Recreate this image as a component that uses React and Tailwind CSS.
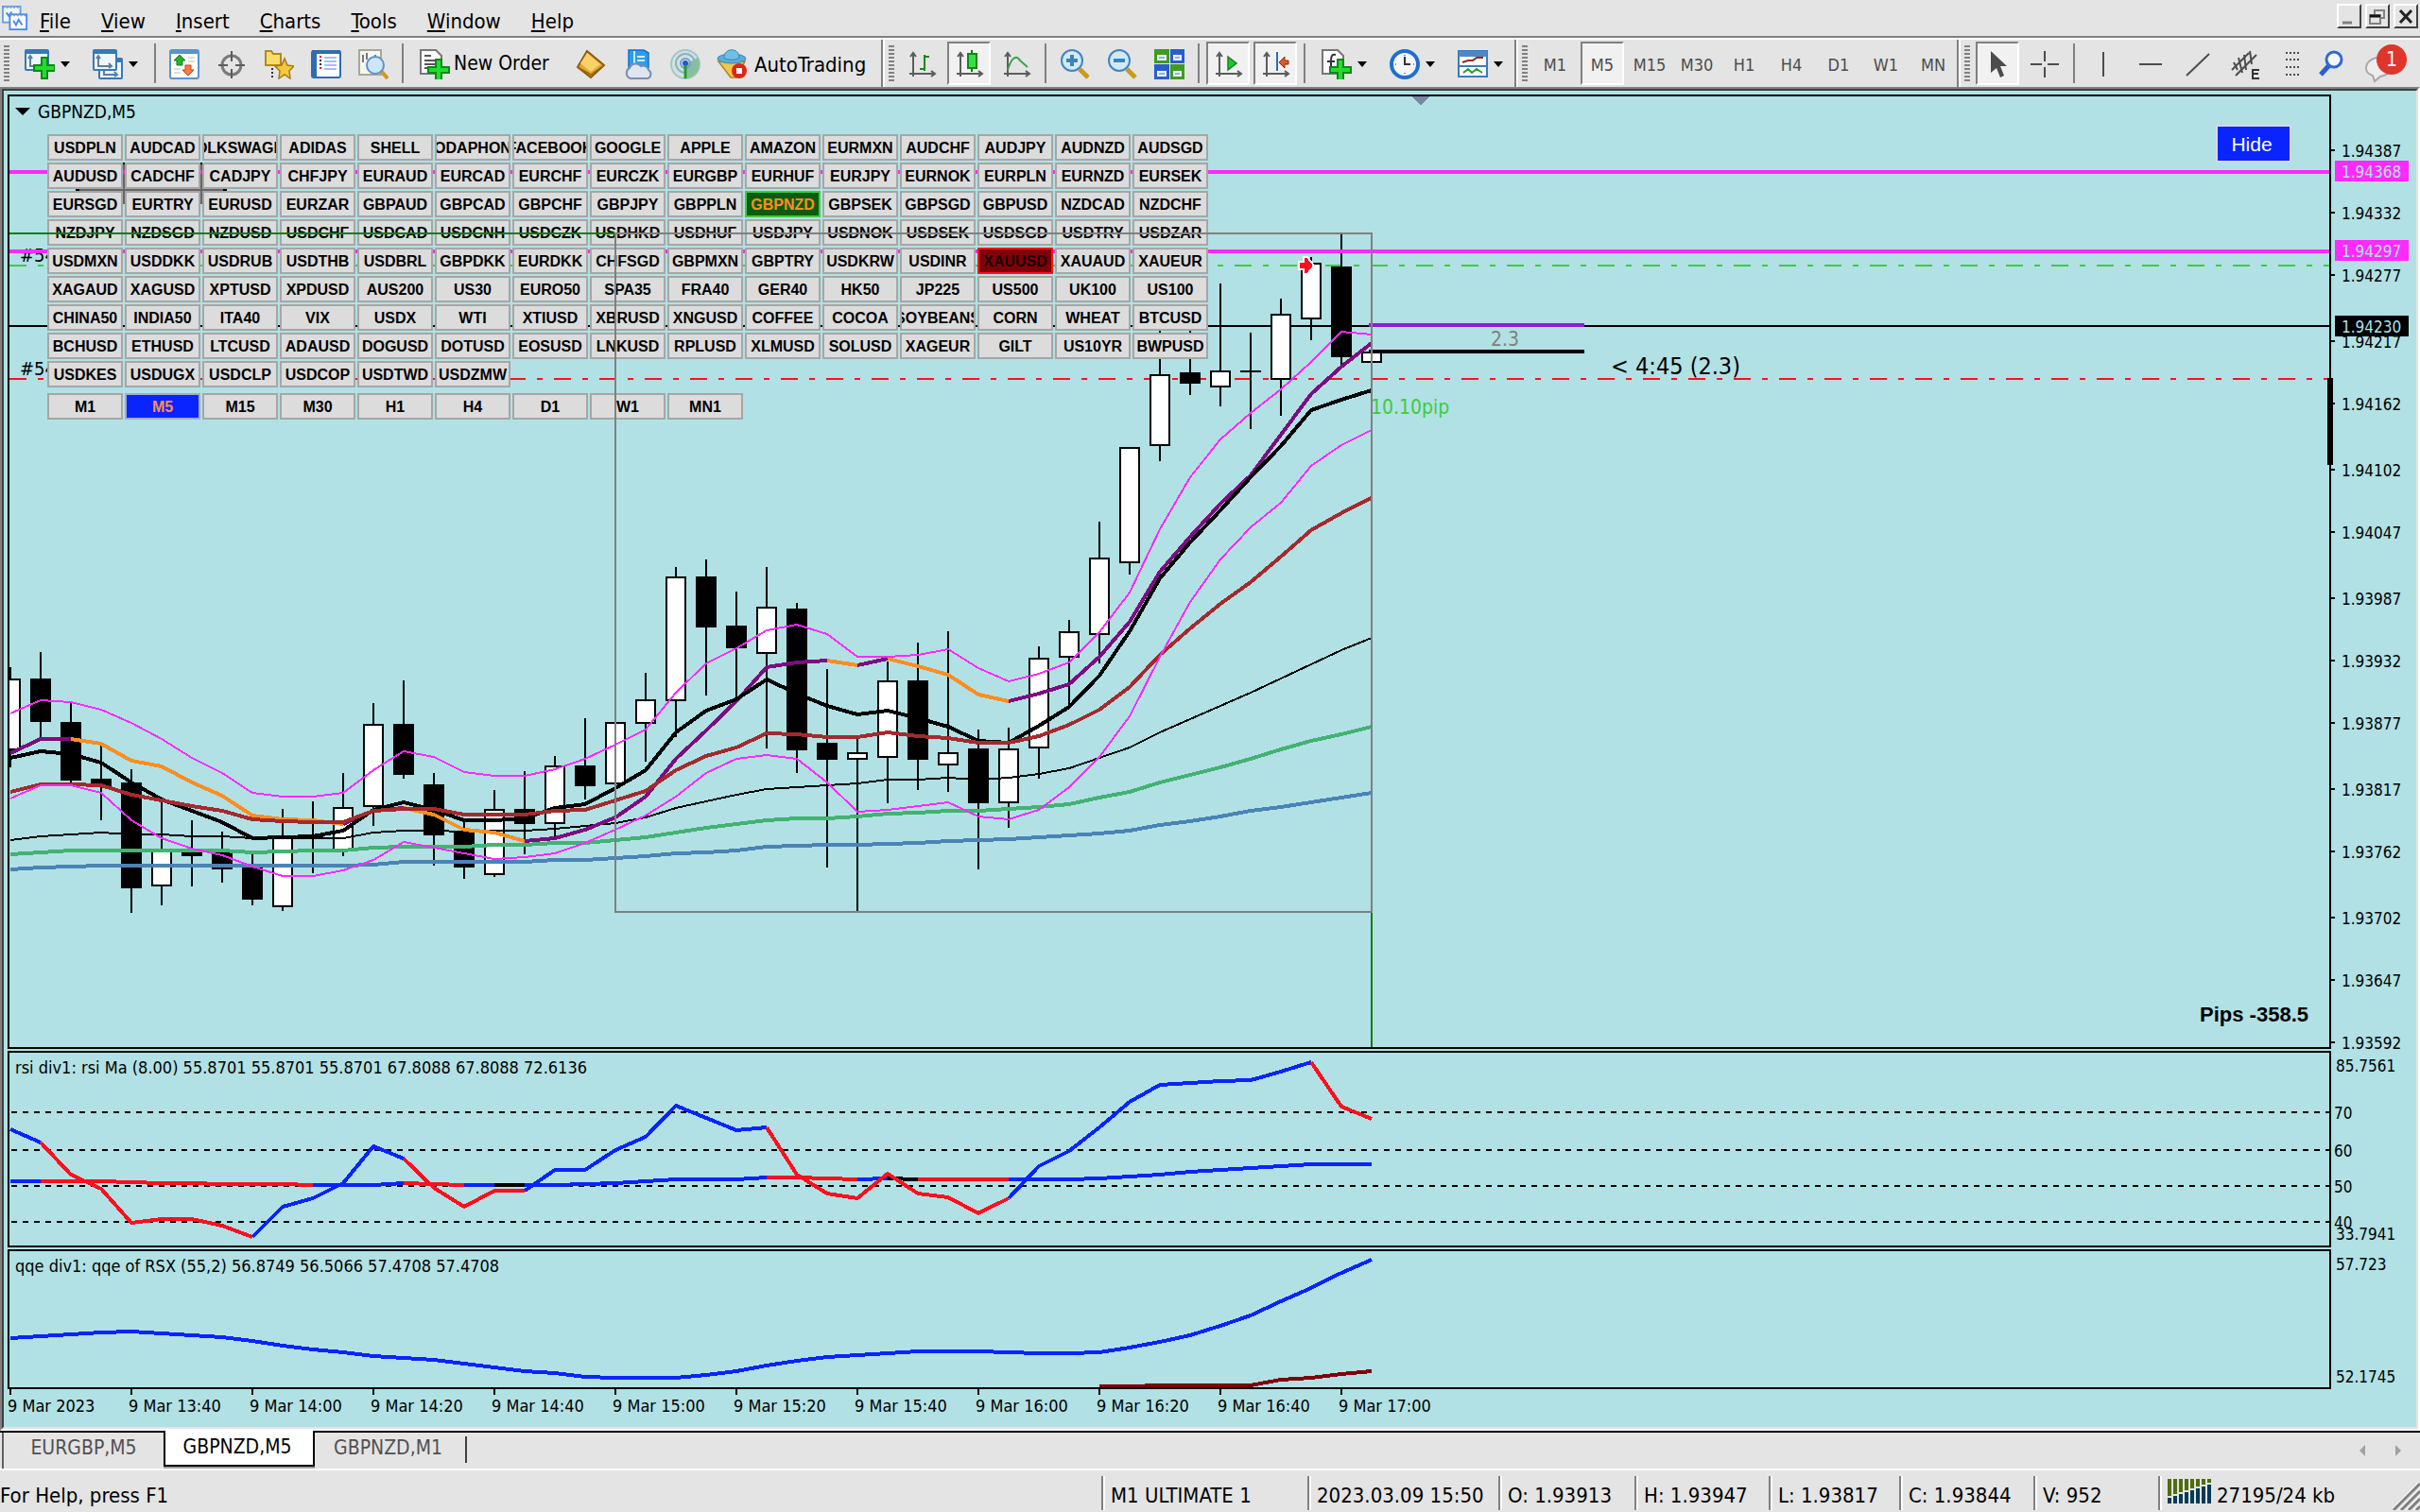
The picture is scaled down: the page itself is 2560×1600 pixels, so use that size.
import React from "react";

/* ---------- chart data (one entry per 5-minute bar) ---------- */
const barX = (i) => 11 + i * 32;

// [type, bodyTop, bodyBottom, high, low]
const candles = [
  ["w", 718, 794, 706, 812], ["b", 718, 764, 690, 780], ["b", 764, 826, 744, 828], ["b", 824, 832, 788, 868],
  ["b", 828, 940, 814, 966], ["w", 900, 938, 846, 958], ["b", 900, 906, 868, 938], ["b", 902, 920, 880, 934],
  ["b", 916, 952, 904, 958], ["w", 886, 960, 856, 964], ["b", 884, 888, 848, 924], ["w", 854, 900, 818, 906],
  ["w", 766, 854, 744, 874], ["b", 766, 820, 720, 824], ["b", 830, 884, 818, 916], ["b", 880, 918, 870, 930],
  ["w", 856, 926, 836, 928], ["b", 856, 872, 816, 904], ["w", 810, 872, 800, 886], ["b", 810, 832, 760, 846],
  ["w", 764, 830, 764, 830], ["w", 740, 766, 712, 806], ["w", 610, 742, 600, 780], ["b", 610, 664, 592, 736],
  ["b", 662, 686, 626, 740], ["w", 642, 692, 600, 792], ["b", 644, 794, 638, 818], ["b", 786, 804, 708, 918],
  ["w", 796, 804, 778, 964], ["w", 720, 802, 700, 850], ["b", 720, 804, 680, 836], ["w", 796, 810, 668, 838],
  ["b", 792, 850, 772, 920], ["w", 792, 850, 770, 876], ["w", 696, 792, 684, 824], ["w", 668, 696, 656, 748],
  ["w", 590, 672, 552, 702], ["w", 473, 596, 473, 608], ["w", 396, 472, 350, 488], ["b", 394, 406, 350, 418],
  ["w", 392, 410, 300, 430], ["b", 392, 394, 352, 454], ["w", 332, 402, 316, 440], ["w", 278, 338, 272, 360],
  ["b", 282, 378, 248, 386], ["w", 372, 384, 372, 384],
];

const upperBand = [755, 741, 743, 751, 765, 782, 802, 818, 839, 843, 843, 839, 815, 795, 801, 817, 821, 821, 814, 803, 788, 772, 733, 702, 686, 667, 661, 671, 695, 695, 693, 687, 707, 721, 713, 701, 669, 627, 560, 505, 465, 437, 412, 383, 351, 354];
const lowerBand = [845, 831, 831, 839, 868, 887, 898, 905, 917, 927, 927, 921, 910, 891, 897, 903, 909, 907, 903, 892, 878, 863, 843, 818, 803, 799, 803, 828, 859, 857, 853, 849, 864, 867, 857, 833, 801, 758, 695, 637, 592, 558, 532, 493, 471, 455];
const trendMa = [797, 782, 782, 787, 805, 811, 828, 842, 863, 867, 868, 872, 858, 855, 862, 878, 881, 890, 887, 878, 865, 843, 803, 773, 742, 706, 701, 699, 704, 697, 705, 714, 735, 742, 734, 724, 695, 658, 605, 568, 533, 503, 460, 417, 388, 363];
const fastMa = [802, 795, 798, 807, 828, 846, 858, 870, 887, 886, 885, 879, 857, 849, 857, 868, 868, 866, 855, 851, 834, 815, 775, 752, 740, 719, 734, 747, 756, 752, 760, 769, 784, 786, 768, 748, 715, 668, 612, 574, 540, 505, 472, 434, 423, 413];
const brownMa = [838, 830, 830, 831, 841, 847, 853, 858, 867, 869, 870, 870, 858, 856, 856, 862, 862, 862, 858, 857, 847, 837, 815, 800, 791, 776, 777, 780, 780, 775, 779, 781, 786, 786, 779, 767, 751, 727, 693, 665, 639, 616, 589, 561, 543, 527];
const thinMa = [889, 885, 883, 881, 883, 883, 885, 885, 887, 887, 887, 887, 881, 879, 879, 880, 879, 879, 877, 874, 871, 865, 855, 848, 841, 835, 833, 831, 829, 825, 825, 823, 825, 823, 819, 813, 802, 791, 775, 761, 747, 733, 718, 703, 688, 675];
const greenMa = [904, 902, 900, 900, 900, 900, 900, 900, 902, 901, 900, 900, 897, 896, 896, 896, 894, 894, 892, 892, 889, 886, 881, 876, 872, 868, 866, 866, 864, 861, 860, 858, 858, 856, 854, 851, 844, 838, 828, 820, 812, 803, 793, 784, 777, 769];
const blueMa = [920, 918, 917, 916, 916, 916, 916, 916, 916, 916, 916, 916, 915, 912, 912, 912, 912, 912, 910, 910, 908, 906, 903, 902, 900, 896, 895, 894, 894, 893, 892, 890, 889, 888, 886, 884, 882, 879, 873, 869, 864, 858, 854, 849, 844, 839];

const rsiFast = [1195, 1209, 1243, 1258, 1294, 1290, 1290, 1297, 1309, 1277, 1268, 1252, 1213, 1226, 1257, 1277, 1260, 1260, 1238, 1238, 1217, 1203, 1170, 1183, 1196, 1193, 1243, 1263, 1268, 1242, 1263, 1267, 1284, 1268, 1234, 1218, 1193, 1166, 1148, 1146, 1144, 1143, 1134, 1124, 1171, 1184];
const rsiSlow = [1250, 1250, 1250, 1250, 1251, 1252, 1252, 1253, 1253, 1253, 1254, 1254, 1254, 1252, 1253, 1254, 1254, 1254, 1254, 1253, 1252, 1250, 1248, 1248, 1248, 1246, 1246, 1247, 1248, 1247, 1248, 1248, 1248, 1248, 1248, 1248, 1247, 1245, 1243, 1240, 1238, 1236, 1234, 1232, 1232, 1232];
const qqe = [1416, 1414, 1412, 1410, 1409, 1411, 1413, 1415, 1419, 1424, 1428, 1431, 1435, 1437, 1439, 1443, 1447, 1451, 1453, 1457, 1458, 1458, 1458, 1455, 1451, 1445, 1440, 1436, 1434, 1432, 1430, 1430, 1430, 1431, 1432, 1432, 1431, 1426, 1420, 1413, 1403, 1392, 1377, 1363, 1347, 1333];
const qqeSlow = [1467, 1467, 1466, 1466, 1466, 1466, 1460, 1458, 1454, 1451];

const BLUE = "#0a24ff";
const RED = "#ff0f1f";
const MAGENTA = "#ff2aff";
const PURPLE = "#7e0c80";
const ORANGE = "#ff8e21";
const GREEN = "#3ecb3f";

const points = (ys, from = 0) => ys.map((y, i) => `${barX(i + from)},${y}`).join(" ");

function Line({ ys, color, width = 4, from = 0 }) {
  return <polyline points={points(ys, from)} fill="none" stroke={color} strokeWidth={width} />;
}

function Segments({ ys, parts }) {
  return parts.map(([a, b, color]) => (
    <Line key={`${a}-${b}`} ys={ys.slice(a, b + 1)} from={a} color={color} />
  ));
}

function Candles() {
  return candles.map(([type, top, bottom, high, low], i) => {
    const x = barX(i);
    return (
      <g key={i}>
        <rect x={x - 1} y={high} width="2" height={low - high} fill="#000" />
        <rect x={x - 11} y={top} width="22" height={bottom - top} fill="#000" />
        {type === "w" && <rect x={x - 9} y={top + 2} width="18" height={bottom - top - 4} fill="#fff" />}
      </g>
    );
  });
}

/* ---------- symbol grid ---------- */
const symbols = `USDPLN AUDCAD VOLKSWAGEN ADIDAS SHELL VODAPHONE FACEBOOK GOOGLE APPLE AMAZON EURMXN AUDCHF AUDJPY AUDNZD AUDSGD
AUDUSD CADCHF CADJPY CHFJPY EURAUD EURCAD EURCHF EURCZK EURGBP EURHUF EURJPY EURNOK EURPLN EURNZD EURSEK
EURSGD EURTRY EURUSD EURZAR GBPAUD GBPCAD GBPCHF GBPJPY GBPPLN GBPNZD GBPSEK GBPSGD GBPUSD NZDCAD NZDCHF
NZDJPY NZDSGD NZDUSD USDCHF USDCAD USDCNH USDCZK USDHKD USDHUF USDJPY USDNOK USDSEK USDSGD USDTRY USDZAR
USDMXN USDDKK USDRUB USDTHB USDBRL GBPDKK EURDKK CHFSGD GBPMXN GBPTRY USDKRW USDINR XAUUSD XAUAUD XAUEUR
XAGAUD XAGUSD XPTUSD XPDUSD AUS200 US30 EURO50 SPA35 FRA40 GER40 HK50 JP225 US500 UK100 US100
CHINA50 INDIA50 ITA40 VIX USDX WTI XTIUSD XBRUSD XNGUSD COFFEE COCOA SOYBEANS CORN WHEAT BTCUSD
BCHUSD ETHUSD LTCUSD ADAUSD DOGUSD DOTUSD EOSUSD LNKUSD RPLUSD XLMUSD SOLUSD XAGEUR GILT US10YR BWPUSD
USDKES USDUGX USDCLP USDCOP USDTWD USDZMW`.split(/\s+/);
const frames = ["M1", "M5", "M15", "M30", "H1", "H4", "D1", "W1", "MN1"];

function cellTone(name) {
  if (name === "GBPNZD") return "border-[#3ecb3f] bg-[#0b5c10] text-[#ff8e21]";
  if (name === "XAUUSD") return "border-[#ff0f1f] bg-[#800008] text-[#1c0000]";
  if (name === "M5") return "border-[#a9a9c8] bg-[#0a24ff] text-[#ff8e50]";
  return "border-[#a6a6a6] bg-[#dcdcdc] text-black";
}

function Cell({ name }) {
  return (
    <button
      type="button"
      className={`flex h-7 items-center justify-center overflow-hidden whitespace-nowrap border-2 pt-0.5 font-['Liberation_Sans',sans-serif] text-[16px] leading-none font-bold ${cellTone(name)}`}
    >
      {name}
    </button>
  );
}

/* ---------- toolbar icons ---------- */
function Icon({ children }) {
  return (
    <svg viewBox="0 0 32 32" className="size-8 shrink-0" fill="none" aria-hidden="true">
      {children}
    </svg>
  );
}
const GreenPlus = ({ x = 0, y = 0 }) => (
  <path transform={`translate(${x} ${y})`} d="M8 0h6v8h8v6h-8v8H8v-8H0V8h8z" fill="#22dd2c" stroke="#0c8a14" strokeWidth="2" />
);
const ChartSheet = ({ x = 0, y = 0 }) => (
  <g transform={`translate(${x} ${y})`}>
    <rect x="1" y="1" width="24" height="21" rx="1" fill="#eef5fc" stroke="#3a78b4" strokeWidth="2" />
    <path d="M1 3h24" stroke="#3a78b4" strokeWidth="4" />
    <path d="M6 8v10h14M4 10l2-3 2 3M17 15l3 3-3 2" stroke="#5a7fa6" strokeWidth="2" />
  </g>
);
const Axes = () => <path d="M7 4v25M3 26h26M4 8l3-4 3 4M26 23l4 3-4 3" stroke="#5c5c5c" strokeWidth="2" />;

const icons = {
  newChart: <Icon><ChartSheet /><GreenPlus x={10} y={9} /></Icon>,
  profiles: <Icon><ChartSheet x={6} y={9} /><ChartSheet /></Icon>,
  market: (
    <Icon>
      <rect x="1" y="1" width="30" height="30" rx="2" fill="#fff" stroke="#5a94cf" strokeWidth="2" />
      <path d="M1 3h30" stroke="#5a94cf" strokeWidth="4" />
      <path d="M20 9h7M20 13h7M5 21h7M5 25h7" stroke="#ddd" strokeWidth="2" />
      <path d="M11 6l6 6h-3v5H8v-5H5z" fill="#22b42c" stroke="#118018" />
      <path d="M20 28l-6-6h3v-5h6v5h3z" fill="#ff7a4a" stroke="#c83c14" />
    </Icon>
  ),
  target: (
    <Icon>
      <circle cx="16" cy="17" r="10" stroke="#7a7a7a" strokeWidth="3" />
      <path d="M16 2v11M16 21v10M2 17h10M20 17h10" stroke="#5c5c5c" strokeWidth="2" />
    </Icon>
  ),
  star: (
    <Icon>
      <path d="M2 2h6l2 3h8v12H2z" fill="#f7dc6a" stroke="#b08a1c" strokeWidth="2" />
      <path d="M9 20v12" stroke="#333" strokeWidth="2" strokeDasharray="2 2" />
      <path d="M22 10l3 7 7 1-5 5 1 8-6-4-6 4 1-8-5-5 7-1z" fill="#f5c93c" stroke="#a87a14" strokeWidth="1.5" />
    </Icon>
  ),
  list: (
    <Icon>
      <rect x="1" y="2" width="30" height="28" rx="2" fill="#fff" stroke="#2f6cb0" strokeWidth="2" />
      <path d="M1 3h30" stroke="#2f6cb0" strokeWidth="4" />
      <path d="M4 4v25" stroke="#2f6cb0" strokeWidth="4" />
      <path d="M14 9h13M14 13h13M14 17h13M14 21h13" stroke="#a9bdf2" strokeWidth="2" />
      <path d="M9 7h2v2H9zM9 19h2v2H9z" fill="red" />
      <path d="M10 11v7" stroke="#222" strokeWidth="2" strokeDasharray="2 2" />
    </Icon>
  ),
  tester: (
    <Icon>
      <rect x="1" y="1" width="23" height="26" fill="#f6f6f2" stroke="#a9a795" strokeWidth="2" />
      <path d="M5 6v8M9 4v7M18 6v6" stroke="#777" strokeWidth="2" />
      <path d="M24 23l7 8" stroke="#d19a1c" strokeWidth="4" />
      <circle cx="18" cy="17" r="9" fill="#cde6fa" stroke="#5e93c4" strokeWidth="2" />
    </Icon>
  ),
  order: (
    <Icon>
      <path d="M1 1h16l6 6v19H1z" fill="#fafafa" stroke="#777" strokeWidth="2" />
      <path d="M5 7h7M5 12h12M5 16h12M5 20h6" stroke="#555" strokeWidth="2" />
      <GreenPlus x={9} y={11} />
    </Icon>
  ),
  gold: (
    <Icon>
      <path d="M12 2l18 15-14 13L2 19z" fill="#e6a82e" stroke="#8a5a10" strokeWidth="2" />
      <path d="M12 4l14 12-10 8L5 15z" fill="#f8d268" />
      <path d="M2 19l14 8 14-10" stroke="#9a6514" strokeWidth="1.5" />
    </Icon>
  ),
  cloud: (
    <Icon>
      <path d="M6 1h16l5 3v16H6z" fill="#2a9df2" stroke="#1672c4" strokeWidth="1.5" />
      <path d="M12 2v17M15 8h8M15 12h8" stroke="#cfeaff" strokeWidth="2" />
      <path d="M8 31a6 6 0 01-1-11 7 7 0 0112-2 6 6 0 018 4 5 5 0 01-1 9z" fill="#dfe5f2" stroke="#7c8cb0" strokeWidth="2" />
    </Icon>
  ),
  signal: (
    <Icon>
      <circle cx="16" cy="16" r="15" fill="#d3e2df" stroke="#a4c4c8" strokeWidth="2" />
      <path d="M16 16V31a15 15 0 0013-22z" fill="#84c48c" />
      <circle cx="16" cy="15" r="10" stroke="#8ab2cc" strokeWidth="2" />
      <circle cx="16" cy="15" r="5" stroke="#6f9fd4" strokeWidth="2" />
      <circle cx="16" cy="15" r="3" fill="#2458c8" />
      <path d="M16 17v14" stroke="#1f9c30" strokeWidth="3" />
    </Icon>
  ),
  auto: (
    <Icon>
      <path d="M2 13h28l-9 17h-6z" fill="#f2c64a" stroke="#b08222" strokeWidth="1.5" />
      <ellipse cx="16" cy="10" rx="15" ry="5" fill="#58acd8" stroke="#3b86b2" />
      <path d="M8 9c0-11 16-11 16 0-4 3-12 3-16 0z" fill="#6fc0e6" stroke="#3b86b2" />
      <circle cx="24" cy="23" r="8" fill="#e02418" />
      <path d="M21 20h6v6h-6z" fill="#fff" />
    </Icon>
  ),
  bars: <Icon><Axes /><path d="M19 6v17M19 8h5M14 21h5" stroke="#128a18" strokeWidth="2" /></Icon>,
  candle: (
    <Icon>
      <Axes />
      <path d="M19 1v23" stroke="#0c7a14" strokeWidth="2" />
      <rect x="15" y="5" width="9" height="15" fill="#35e045" stroke="#0c8a14" strokeWidth="2" />
    </Icon>
  ),
  line: <Icon><Axes /><path d="M7 22c4-14 10-16 13-10l8 7" stroke="#3aa04a" strokeWidth="2" /></Icon>,
  zoomIn: (
    <Icon>
      <path d="M21 21l9 9" stroke="#c89a1e" strokeWidth="5" />
      <circle cx="13" cy="12" r="11" fill="#cfeafc" stroke="#3f84c4" strokeWidth="2" />
      <path d="M13 6v12M7 12h12" stroke="#3f84b0" strokeWidth="4" />
    </Icon>
  ),
  zoomOut: (
    <Icon>
      <path d="M21 21l9 9" stroke="#c89a1e" strokeWidth="5" />
      <circle cx="13" cy="12" r="11" fill="#cfeafc" stroke="#3f84c4" strokeWidth="2" />
      <path d="M7 12h12" stroke="#3f84b0" strokeWidth="4" />
    </Icon>
  ),
  tiles: (
    <Icon>
      <path d="M0 0h16v15H0zM17 16h15v16H17z" fill="#3f9a22" />
      <path d="M17 0h15v15H17zM0 16h16v16H0z" fill="#2a5cd0" />
      <path d="M3 6h10v6H3zM20 6h9v6h-9zM3 23h10v6H3zM20 23h9v6h-9z" fill="#eef4fb" />
      <path d="M5 9h6M22 9h5M5 26h6M22 26h5" stroke="#8fb4d8" strokeWidth="2" />
    </Icon>
  ),
  scroll: <Icon><Axes /><path d="M16 8l9 7-9 7z" fill="#27c234" stroke="#0c8a14" strokeWidth="1.5" /></Icon>,
  shift: (
    <Icon>
      <Axes />
      <path d="M18 3v20" stroke="#2d6fa8" strokeWidth="2" />
      <path d="M20 14l6-6v4h4v4h-4v4z" fill="#e05a28" stroke="#8c2a0c" />
    </Icon>
  ),
  indicator: (
    <Icon>
      <path d="M1 1h16l6 6v19H1z" fill="#fafafa" stroke="#777" strokeWidth="2" />
      <path d="M15 6c-5-1-5 3-5 7v9M6 13h8" stroke="#333" strokeWidth="2" />
      <GreenPlus x={9} y={11} />
    </Icon>
  ),
  clock: (
    <Icon>
      <circle cx="16" cy="16" r="14" fill="#f4f8fc" stroke="#1f6fd0" strokeWidth="4" />
      <path d="M16 8v8h6" stroke="#333" strokeWidth="2" />
      <path d="M16 6v1M16 25v1M6 16h1M25 16h1" stroke="#888" strokeWidth="2" />
    </Icon>
  ),
  template: (
    <Icon>
      <rect x="1" y="2" width="30" height="27" fill="#fff" stroke="#3a7abf" strokeWidth="2" />
      <path d="M1 5h30" stroke="#4a88cc" strokeWidth="6" />
      <path d="M1 18h30" stroke="#3a7abf" strokeWidth="2" />
      <path d="M5 14l6-2h5l4-3h7" stroke="#9a2a10" strokeWidth="2" />
      <path d="M6 25l5-4 4 4 5-4 6 4" stroke="#2a9a30" strokeWidth="2" />
    </Icon>
  ),
  cursor: <Icon><path d="M9 2v23l6-5 4 10 4-2-4-10h7z" fill="#4c4c4c" /></Icon>,
  cross: <Icon><path d="M16 2v11M16 19v11M1 16h12M19 16h12" stroke="#4c4c4c" strokeWidth="2" /></Icon>,
  vline: <Icon><path d="M16 3v26" stroke="#4c4c4c" strokeWidth="2" /></Icon>,
  hline: <Icon><path d="M4 16h24" stroke="#4c4c4c" strokeWidth="2" /></Icon>,
  trend: <Icon><path d="M4 28L28 5" stroke="#4c4c4c" strokeWidth="2" /></Icon>,
  channel: (
    <Icon>
      <path d="M2 22L20 4M6 28L28 6M4 14l4 8M9 9l4 16M15 6l2 16M21 2l2 14" stroke="#4c4c4c" strokeWidth="2" />
      <path d="M31 22h-7v9h7M24 26h6" stroke="#333" strokeWidth="2" />
    </Icon>
  ),
  fibo: (
    <Icon>
      <path d="M9 4h14M9 11h14M9 19h14M9 27h14" stroke="#4c4c4c" strokeWidth="2" strokeDasharray="2 2" />
    </Icon>
  ),
};

const Caret = () => (
  <svg viewBox="0 0 10 6" className="h-1.5 w-2.5 shrink-0" aria-hidden="true">
    <path d="M0 0h10L5 6z" fill="#000" />
  </svg>
);
const Grip = () => (
  <span className="mx-1 h-[38px] w-1.5 shrink-0 bg-[repeating-linear-gradient(to_bottom,#808080_0_2px,transparent_2px_4px)]" />
);
const Rule = () => <span className="mx-[5px] h-[42px] w-0.5 shrink-0 bg-[#808080]" />;
const BandEdge = () => <span className="h-full w-1 shrink-0 border-r-2 border-l-2 border-r-white border-l-[#808080]" />;

function Tool({ icon, label, pressed, children }) {
  return (
    <button
      type="button"
      aria-label={label}
      aria-pressed={pressed}
      className={`mx-0.5 flex h-[46px] w-[46px] shrink-0 items-center justify-center border-2 pt-0.5 text-[18px] text-[#4c4c4c] ${
        pressed ? "border-t-[#808080] border-r-white border-b-white border-l-[#808080] bg-[#f1f1f1]" : "border-transparent"
      }`}
    >
      {icon ? icons[icon] : children}
    </button>
  );
}
function MenuTool({ icon, label }) {
  return (
    <button type="button" aria-label={label} className="flex h-full w-[72px] shrink-0 items-center gap-1.5 pt-0.5 pl-3">
      {icons[icon]}
      <Caret />
    </button>
  );
}

/* ---------- bars at the top ---------- */
function MenuBar() {
  return (
    <nav className="flex h-[38px] shrink-0 items-center text-[22px]">
      <svg viewBox="0 0 30 30" className="mr-3 ml-0.5 size-7" fill="none" aria-hidden="true">
        <rect x="1" y="2" width="20" height="18" fill="#eef5ff" stroke="#6b9cf0" strokeWidth="2" />
        <rect x="9" y="11" width="19" height="17" fill="#fff" stroke="#4f86ee" strokeWidth="2" />
        <path d="M1 3h20M9 12h19" stroke="#58b0c8" strokeWidth="2" strokeDasharray="2 2" />
        <path d="M13 18l3 5 3-6 4 6M5 9l3 4 3-5" stroke="#4f86ee" strokeWidth="2" />
      </svg>
      <div className="flex flex-1 gap-8 pt-2">
        {["File", "View", "Insert", "Charts", "Tools", "Window", "Help"].map((m) => (
          <button key={m} type="button" className="leading-6">
            <u className="underline-offset-2">{m[0]}</u>
            {m.slice(1)}
          </button>
        ))}
      </div>
      <div className="flex gap-1 pr-0.5 pb-1">
        {["Minimize", "Restore", "Close"].map((w) => (
          <button
            key={w}
            type="button"
            aria-label={w}
            className="size-[26px] border-2 border-t-white border-r-[#404040] border-b-[#404040] border-l-white"
          >
            <svg viewBox="0 0 22 22" className="size-full" fill="none" stroke="#222" strokeWidth="2" aria-hidden="true">
              {w === "Minimize" && <path d="M4 18h10" stroke="#808080" strokeWidth="3" />}
              {w === "Restore" && (
                <>
                  <path d="M8 9V5h10v8h-4" stroke="#808080" />
                  <path d="M3 10h11v9H3z" stroke="#808080" />
                  <path d="M3 11h11" strokeWidth="3" stroke="#111" />
                </>
              )}
              {w === "Close" && <path d="M5 5l12 13M17 5L5 18" strokeWidth="3" />}
            </svg>
          </button>
        ))}
      </div>
    </nav>
  );
}

function Toolbar() {
  return (
    <div className="flex h-[54px] shrink-0 items-center border-t-2 border-t-[#808080]">
      <div className="flex h-[52px] w-full items-center border-t-2 border-t-white">
        <Grip />
        <MenuTool icon="newChart" label="New chart" />
        <MenuTool icon="profiles" label="Profiles" />
        <Rule />
        <Tool icon="market" label="Market watch" />
        <Tool icon="target" label="Data window" />
        <Tool icon="star" label="Navigator" />
        <Tool icon="list" label="Terminal" />
        <Tool icon="tester" label="Strategy tester" />
        <Rule />
        <button type="button" className="flex h-full w-[168px] shrink-0 items-center gap-1 pt-0.5 pl-3 text-[21px] whitespace-nowrap">
          {icons.order}
          New Order
        </button>
        <Tool icon="gold" label="MetaEditor" />
        <Tool icon="cloud" label="Hosting" />
        <Tool icon="signal" label="Signals" />
        <button type="button" className="flex h-full w-[182px] shrink-0 items-center gap-2 pt-0.5 pl-2 text-[22px] whitespace-nowrap">
          {icons.auto}
          AutoTrading
        </button>
        <BandEdge />
        <Grip />
        <Tool icon="bars" label="Bar chart" />
        <Tool icon="candle" label="Candlesticks" pressed />
        <Tool icon="line" label="Line chart" />
        <Rule />
        <Tool icon="zoomIn" label="Zoom in" />
        <Tool icon="zoomOut" label="Zoom out" />
        <Tool icon="tiles" label="Tile windows" />
        <Rule />
        <Tool icon="scroll" label="Auto scroll" pressed />
        <Tool icon="shift" label="Chart shift" pressed />
        <Rule />
        <MenuTool icon="indicator" label="Indicators" />
        <MenuTool icon="clock" label="Periods" />
        <MenuTool icon="template" label="Templates" />
        <BandEdge />
        <Grip />
        {["M1", "M5", "M15", "M30", "H1", "H4", "D1", "W1", "MN"].map((f) => (
          <Tool key={f} label={f} pressed={f === "M5"}>{f}</Tool>
        ))}
        <BandEdge />
        <Grip />
        <Tool icon="cursor" label="Cursor" pressed />
        <Tool icon="cross" label="Crosshair" />
        <Rule />
        <Tool icon="vline" label="Vertical line" />
        <Tool icon="hline" label="Horizontal line" />
        <Tool icon="trend" label="Trendline" />
        <Tool icon="channel" label="Channel" />
        <Tool icon="fibo" label="Fibonacci" />
        <div className="ml-auto flex items-center gap-5 pr-3">
          <button type="button" aria-label="Search">
            <svg viewBox="0 0 28 28" className="size-7" fill="none" aria-hidden="true">
              <path d="M12 16L3 26" stroke="#2a5fc8" strokeWidth="5" />
              <circle cx="17" cy="10" r="8" fill="#f3f8ff" stroke="#3468d0" strokeWidth="3" />
            </svg>
          </button>
          <button type="button" className="relative h-11 w-12">
            <svg viewBox="0 0 48 44" className="size-full" aria-hidden="true">
              <path d="M14 16c-14 4-14 16-4 19l2 6 6-5c8-2 14-6 12-14z" fill="#ededed" stroke="#a8a8a8" strokeWidth="2" />
              <circle cx="30" cy="18" r="16" fill="#e0352a" />
            </svg>
            <span className="absolute inset-x-0 top-0 pl-3 text-center text-[21px] leading-9 text-white">1</span>
          </button>
        </div>
      </div>
    </div>
  );
}

/* ---------- chart panes ---------- */
const prices = [
  ["1.94387", 159], ["1.94332", 225], ["1.94277", 291], ["1.94217", 361], ["1.94162", 427],
  ["1.94102", 497], ["1.94047", 563], ["1.93987", 633], ["1.93932", 699], ["1.93877", 765],
  ["1.93817", 835], ["1.93762", 901], ["1.93702", 971], ["1.93647", 1037], ["1.93592", 1103],
];
const tags = [["1.94368", 181, MAGENTA], ["1.94297", 265, MAGENTA], ["1.94230", 345, "#000"]];

function Plot({ top, children, over }) {
  return (
    <div className="relative min-w-0 flex-1 border-2 border-black">
      <svg className="absolute inset-0 size-full" shapeRendering="crispEdges" aria-hidden="true">
        <g transform={`translate(-10 ${-top})`}>{children}</g>
      </svg>
      {over}
    </div>
  );
}

function Scale({ top, labels, ticks, children }) {
  return (
    <svg className="h-full w-[90px] shrink-0 overflow-visible" aria-hidden="true">
      <g transform={`translate(0 ${-top})`} fontSize="17" fill="#000">
        {ticks.map((y) => <rect key={y} x="0" y={y - 1} width="4" height="2" />)}
        {labels.map(([t, y, x]) => <text key={t} x={x ?? 11} y={y + 7}>{t}</text>)}
        {children}
      </g>
    </svg>
  );
}

function PricePane() {
  return (
    <section className="flex min-h-0 flex-1">
      <Plot
        top={102}
        over={
          <>
            <div className="relative flex h-10 items-start gap-2 pt-1 pl-1.5 text-[19px] leading-6">
              <svg viewBox="0 0 16 8" className="mt-2 h-2 w-4" aria-hidden="true"><path d="M0 0h16L8 8z" /></svg>
              <h2>GBPNZD,M5</h2>
            </div>
            <div className="relative ml-10 grid w-max grid-cols-[repeat(15,80px)] gap-0.5">
              {symbols.map((s) => <Cell key={s} name={s} />)}
            </div>
            <div className="relative mt-1.5 ml-10 grid w-max grid-cols-[repeat(9,80px)] gap-0.5">
              {frames.map((f) => <Cell key={f} name={f} />)}
            </div>
            <svg className="pointer-events-none absolute inset-0 size-full" shapeRendering="crispEdges" aria-hidden="true">
              <g transform="translate(-10 -102)" fill="none" strokeWidth="2">
                <rect x="651" y="247" width="800" height="718" stroke="#808080" />
                <path d="M10 247H650M1451 966V1200" stroke="#0c7e0f" />
              </g>
            </svg>
            <button
              type="button"
              className="absolute top-[30px] right-10 h-10 w-20 border-2 border-[#d8d8e0] bg-[#0a24ff] pr-1 font-['Liberation_Sans',sans-serif] text-[21px] leading-none text-white"
            >
              Hide
            </button>
            <p className="absolute right-[22px] bottom-5 font-['Liberation_Sans',sans-serif] text-[22px] leading-7 font-bold">Pips -358.5</p>
            <span className="absolute top-[298px] -right-1 h-[92px] w-1.5 bg-black" />
          </>
        }
      >
        <g strokeWidth="2">
          <line x1="0" x2="110%" y1="345" y2="345" stroke="#000" />
          <line x1="10" x2="110%" y1="281" y2="281" stroke={GREEN} strokeDasharray="18 12 6 12" />
          <line x1="10" x2="110%" y1="401" y2="401" stroke={RED} strokeDasharray="18 12 6 12" />
          <path d="M131 172v44M213 172v44M80 201h160" stroke="#666" />
          <path d="M131 172v2M213 172v2M80 201h4M236 201h4" stroke="#000" />
        </g>
        <g fontSize="20">
          <text x="21" y="277">#54</text>
          <text x="21" y="397">#54</text>
        </g>
        <Candles />
        <Line ys={thinMa} color="#000" width={2} />
        <Line ys={greenMa} color="#43b273" />
        <Line ys={blueMa} color="#4a84b6" />
        <Segments
          ys={trendMa}
          parts={[[0, 2, PURPLE], [2, 11, ORANGE], [11, 13, PURPLE], [13, 17, ORANGE], [17, 27, PURPLE], [27, 28, ORANGE], [28, 29, PURPLE], [29, 33, ORANGE], [33, 45, PURPLE]]}
        />
        <Line ys={fastMa} color="#000" />
        <Line ys={brownMa} color="#a52a2e" />
        <Line ys={upperBand} color={MAGENTA} width={2} />
        <Line ys={lowerBand} color={MAGENTA} width={2} />
        <g strokeWidth="4">
          <line x1="0" x2="110%" y1="182" y2="182" stroke={MAGENTA} />
          <line x1="0" x2="110%" y1="266" y2="266" stroke={MAGENTA} />
          <line x1="1448" x2="1676" y1="344" y2="344" stroke="#8a1fd6" />
          <line x1="1448" x2="1676" y1="372" y2="372" stroke="#000" />
        </g>
        <path d="M1374 277h5v-5h4l7 9-7 9h-4v-5h-5z" fill={RED} stroke="#fff" strokeWidth="2" />
        <path d="M1494 102h18l-9 10z" fill="#7789a0" />
        <text x="1577" y="366" fontSize="21" fill="#808080">2.3</text>
        <text x="1704" y="396" fontSize="25">&lt; 4:45 (2.3)</text>
        <text x="1450" y="438" fontSize="21" fill={GREEN}>10.10pip</text>
      </Plot>
      <Scale top={100} labels={prices} ticks={prices.map((p) => p[1])}>
        {tags.map(([t, y, c]) => (
          <g key={t}>
            <rect x="4" y={y - 11} width="78" height="22" fill={c} />
            <text x="11" y={y + 7} fill="#b1e1e4">{t}</text>
          </g>
        ))}
      </Scale>
    </section>
  );
}

function RsiPane() {
  return (
    <section className="flex h-[208px] shrink-0">
      <Plot top={1114} over={<h2 className="relative pt-1 pl-1.5 text-[18px] leading-6">rsi div1: rsi Ma (8.00) 55.8701 55.8701 55.8701 67.8088 67.8088 72.6136</h2>}>
        {[1177, 1217, 1255, 1293].map((y) => (
          <line key={y} x1="12" x2="110%" y1={y} y2={y} stroke="#000" strokeWidth="2" strokeDasharray="6 6" />
        ))}
        <Segments
          ys={rsiSlow}
          parts={[[0, 1, BLUE], [1, 10, RED], [10, 13, BLUE], [13, 15, RED], [15, 16, BLUE], [16, 17, "#000"], [17, 25, BLUE], [25, 28, RED], [28, 29, BLUE], [29, 30, "#000"], [30, 33, RED], [33, 45, BLUE]]}
        />
        <Segments
          ys={rsiFast}
          parts={[[0, 1, BLUE], [1, 8, RED], [8, 13, BLUE], [13, 17, RED], [17, 25, BLUE], [25, 33, RED], [33, 43, BLUE], [43, 45, RED]]}
        />
      </Plot>
      <Scale
        top={1112}
        labels={[["85.7561", 1127, 5], ["70", 1177, 3], ["60", 1217, 3], ["50", 1255, 3], ["40", 1293, 3], ["33.7941", 1305, 5]]}
        ticks={[]}
      />
    </section>
  );
}

function QqePane() {
  return (
    <section className="flex h-[148px] shrink-0">
      <Plot top={1324} over={<h2 className="relative pt-1 pl-1.5 text-[18px] leading-6">qqe div1: qqe of RSX (55,2) 56.8749 56.5066 57.4708 57.4708</h2>}>
        <Line ys={qqe} color={BLUE} />
        <Line ys={qqeSlow} from={36} color="#80000a" />
      </Plot>
      <Scale top={1322} labels={[["57.723", 1337, 5], ["52.1745", 1456, 5]]} ticks={[]} />
    </section>
  );
}

const times = ["2023", "13:40", "14:00", "14:20", "14:40", "15:00", "15:20", "15:40", "16:00", "16:20", "16:40", "17:00"];

function TimeAxis() {
  return (
    <div className="flex h-10 shrink-0 pl-0.5 text-[18px]">
      {times.map((t) => (
        <div key={t} className="w-32 shrink-0">
          <span className="block h-1.5 w-0.5 bg-black" />
          <span className="-ml-0.5 block leading-6 whitespace-nowrap">9 Mar {t}</span>
        </div>
      ))}
    </div>
  );
}

/* ---------- bottom bars ---------- */
function Tabs() {
  return (
    <div className="flex h-[42px] shrink-0 border-t-2 border-b-2 border-t-black border-b-white pl-0.5 text-[21px] text-[#505050]">
      <button type="button" className="w-[171px] border-l-2 border-[#606060] pb-1">EURGBP,M5</button>
      <button type="button" className="-mt-0.5 mb-0.5 w-[160px] border-x-2 border-b-2 border-black bg-white pr-1 text-black shadow-[0_2px_0_#a0a0a0]">
        GBPNZD,M5
      </button>
      <button type="button" className="w-[159px] pr-1 pb-1">GBPNZD,M1</button>
      <span className="mt-1 h-7 w-0.5 bg-[#404040]" />
      <div className="ml-auto flex items-center gap-8 pr-5">
        <button type="button" aria-label="Scroll tabs left">
          <svg viewBox="0 0 6 12" className="h-3 w-1.5"><path d="M6 0v12L0 6z" fill="#a0a0a0" /></svg>
        </button>
        <button type="button" aria-label="Scroll tabs right">
          <svg viewBox="0 0 6 12" className="h-3 w-1.5"><path d="M0 0v12l6-6z" fill="#a0a0a0" /></svg>
        </button>
      </div>
    </div>
  );
}

function Field({ className, children }) {
  return (
    <div className={`flex h-9 shrink-0 items-center border-l-2 border-[#808080] pt-1 pl-2 whitespace-nowrap shadow-[inset_2px_0_0_#fff] ${className}`}>
      {children}
    </div>
  );
}

function StatusBar() {
  return (
    <footer className="flex h-11 shrink-0 items-center pt-1 text-[22px]">
      <p className="flex-1 pt-1">For Help, press F1</p>
      <Field className="w-[218px]">M1 ULTIMATE 1</Field>
      <Field className="w-[202px]">2023.03.09 15:50</Field>
      <Field className="w-[144px]">O: 1.93913</Field>
      <Field className="w-[142px]">H: 1.93947</Field>
      <Field className="w-[138px]">L: 1.93817</Field>
      <Field className="w-[142px]">C: 1.93844</Field>
      <Field className="w-[132px]">V: 952</Field>
      <Field className="w-[277px] gap-1.5">
        <svg viewBox="0 0 46 26" className="mb-2 h-[26px] w-[46px]" aria-hidden="true">
          {[6, 8, 10, 12, 14, 16, 18, 20].map((h, i) => (
            <g key={h}>
              <rect x={i * 6} y="0" width="4" height={24 - h} fill="#4f6d0e" />
              <rect x={i * 6} y={26 - h} width="4" height={h} fill="#033a58" />
            </g>
          ))}
        </svg>
        27195/24 kb
        <svg viewBox="0 0 30 30" className="ml-auto size-[30px] self-end" aria-hidden="true">
          <path d="M2 30L30 2M10 30L30 10M18 30L30 18M26 30l4-4" stroke="#808080" strokeWidth="3" />
          <path d="M-1 30L30 -1M7 30L30 7M15 30L30 15M23 30l7-7" stroke="#fff" strokeWidth="1" />
        </svg>
      </Field>
    </footer>
  );
}

export default function App() {
  return (
    <main className="flex h-screen min-w-full flex-col overflow-hidden bg-[#e4e4e4] font-['DejaVu_Sans_Condensed','Open_Sans',sans-serif] text-black">
      <MenuBar />
      <Toolbar />
      <div className="flex min-h-0 flex-1 flex-col border-2 border-t-[#808080] border-r-white border-b-white border-l-[#808080]">
        <div className="flex min-h-0 flex-1 flex-col gap-0.5 border-2 border-t-[#404040] border-r-[#e4e4e4] border-b-[#e4e4e4] border-l-[#404040] bg-[#b1e1e4] pt-1 pl-1">
          <PricePane />
          <RsiPane />
          <div className="flex shrink-0 flex-col">
            <QqePane />
            <TimeAxis />
          </div>
        </div>
      </div>
      <Tabs />
      <StatusBar />
    </main>
  );
}
